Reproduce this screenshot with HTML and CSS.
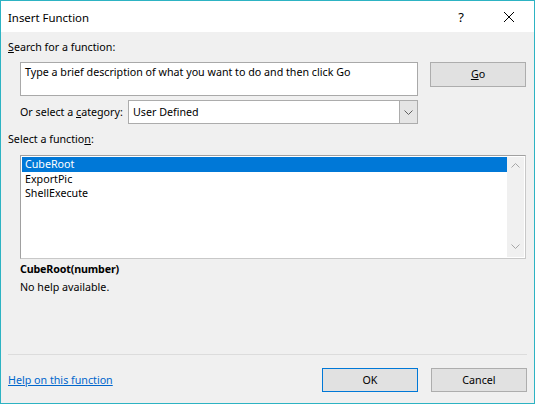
FILE: index.html
```html
<!DOCTYPE html>
<html>
<head>
<meta charset="utf-8">
<link rel="stylesheet" href="styles.css">
</head>
<body>
<div class="window">
  <div class="titlebar">
    <span class="title">Insert Function</span>
    <span class="help">?</span>
    <span class="close"><svg width="12" height="12" viewBox="0 0 12 12"><path d="M1 1 L11 11 M11 1 L1 11" stroke="#000" stroke-width="1" fill="none"/></svg></span>
  </div>
  <div class="content">
    <div class="label"><u>S</u>earch for a function:</div>
    <div class="search-row">
      <div class="search-box">Type a brief description of what you want to do and then click Go</div>
      <div class="btn go"><u>G</u>o</div>
    </div>
    <div class="cat-row">
      <span class="cat-label">Or select a <u>c</u>ategory:</span>
      <div class="select">
        <span class="select-text">User Defined</span>
        <span class="select-arrow"><svg width="9" height="5" viewBox="0 0 9 5"><path d="M0.5 0.5 L4.5 4.5 L8.5 0.5" stroke="#606060" stroke-width="1" fill="none"/></svg></span>
      </div>
    </div>
    <div class="label">Select a functio<u>n</u>:</div>
    <div class="list">
      <div class="items">
        <div class="item selected">CubeRoot</div>
        <div class="item">ExportPic</div>
        <div class="item">ShellExecute</div>
      </div>
      <div class="scrollbar">
        <svg width="9" height="5" viewBox="0 0 9 5"><path d="M0.5 4.5 L4.5 0.5 L8.5 4.5" stroke="#a6a6a6" stroke-width="1" fill="none"/></svg>
        <svg width="9" height="5" viewBox="0 0 9 5"><path d="M0.5 0.5 L4.5 4.5 L8.5 0.5" stroke="#a6a6a6" stroke-width="1" fill="none"/></svg>
      </div>
    </div>
    <div class="sig">CubeRoot(number)</div>
    <div class="desc">No help available.</div>
    <div class="spacer"></div>
    <div class="sep"></div>
    <div class="footer">
      <a class="link" href="#">Help on this function</a>
      <div class="buttons">
        <div class="btn ok">OK</div>
        <div class="btn cancel">Cancel</div>
      </div>
    </div>
  </div>
</div>
</body>
</html>
```
FILE: styles.css
```css
html, body {
  margin: 0;
  padding: 0;
  background: #f0f0f0;
}
body {
  font-family: "Noto Sans", "Open Sans", sans-serif;
  font-size: 10.7px;
  line-height: 15px;
  color: #000;
}
u { text-decoration: underline; text-underline-offset: 1px; }
.window {
  width: 535px;
  height: 404px;
  box-sizing: border-box;
  border: 1px solid #2db3c3;
  display: flex;
  flex-direction: column;
  background: #f0f0f0;
}
.titlebar {
  height: 31px;
  background: #fff;
  display: flex;
  align-items: center;
  padding-left: 7px;
  flex: none;
}
.title {
  font-size: 11.4px;
  flex: 1;
  padding-top: 2px;
}
.help {
  font-size: 13px;
  width: 46px;
  text-align: center;
  margin-right: 2px;
  padding-top: 1px;
}
.close {
  width: 46px;
  display: flex;
  justify-content: center;
  margin-right: 2px;
}
.content {
  flex: 1;
  display: flex;
  flex-direction: column;
  padding: 8px 7px 11px 7px;
}
.label {
  height: 15px;
  white-space: nowrap;
}
.search-row {
  display: flex;
  margin-top: 7px;
  padding-left: 12px;
  align-items: flex-start;
}
.search-box {
  width: 398px;
  height: 34px;
  box-sizing: border-box;
  background: #fff;
  border: 1px solid #a9a9a9;
  padding: 2px 4px;
  white-space: nowrap;
  overflow: hidden;
}
.btn {
  box-sizing: border-box;
  background: #e1e1e1;
  border: 1px solid #adadad;
  display: flex;
  align-items: center;
  justify-content: center;
}
.go {
  width: 96px;
  height: 25px;
  margin-left: 12px;
}
.cat-row {
  display: flex;
  align-items: center;
  margin-top: 4px;
  padding-left: 12px;
}
.cat-label {
  width: 108px;
  white-space: nowrap;
}
.select {
  width: 290px;
  height: 24px;
  box-sizing: border-box;
  background: #fff;
  border: 1px solid #acacac;
  display: flex;
  align-items: stretch;
}
.select-text {
  flex: 1;
  padding-left: 4px;
  display: flex;
  align-items: center;
}
.select-arrow {
  width: 17px;
  background: #e5e5e5;
  border-left: 1px solid #acacac;
  display: flex;
  align-items: center;
  justify-content: center;
}
.cat-row + .label {
  margin-top: 8px;
}
.list {
  margin-top: 8px;
  margin-left: 12px;
  width: 506px;
  height: 104px;
  box-sizing: border-box;
  background: #fff;
  border: 1px solid #a0a0a0;
  border-right-color: #c8c8c8;
  border-bottom-color: #c8c8c8;
  display: flex;
  padding: 1px;
}
.items {
  flex: 1;
}
.item {
  height: 14.5px;
  line-height: 14.5px;
  padding-left: 3px;
}
.item.selected {
  background: #0078d7;
  color: #fff;
}
.scrollbar {
  width: 17px;
  background: #f0f0f0;
  display: flex;
  flex-direction: column;
  align-items: center;
  justify-content: space-between;
  padding: 6px 0 8px;
  box-sizing: border-box;
}
.sig {
  margin-top: 3px;
  margin-left: 12px;
  font-weight: bold;
  font-size: 10.7px;
  letter-spacing: -0.15px;
}
.desc {
  margin-top: 3px;
  margin-left: 12px;
}
.spacer { flex: 1; }
.sep {
  height: 1px;
  background: #dcdcdc;
}
.footer {
  display: flex;
  align-items: center;
  justify-content: space-between;
  margin-top: 13px;
}
.link {
  color: #0066cc;
  text-decoration: underline;
}
.buttons {
  display: flex;
  gap: 13px;
}
.ok, .cancel {
  width: 96px;
  height: 24px;
}
.ok {
  border-color: #0078d7;
}
```
